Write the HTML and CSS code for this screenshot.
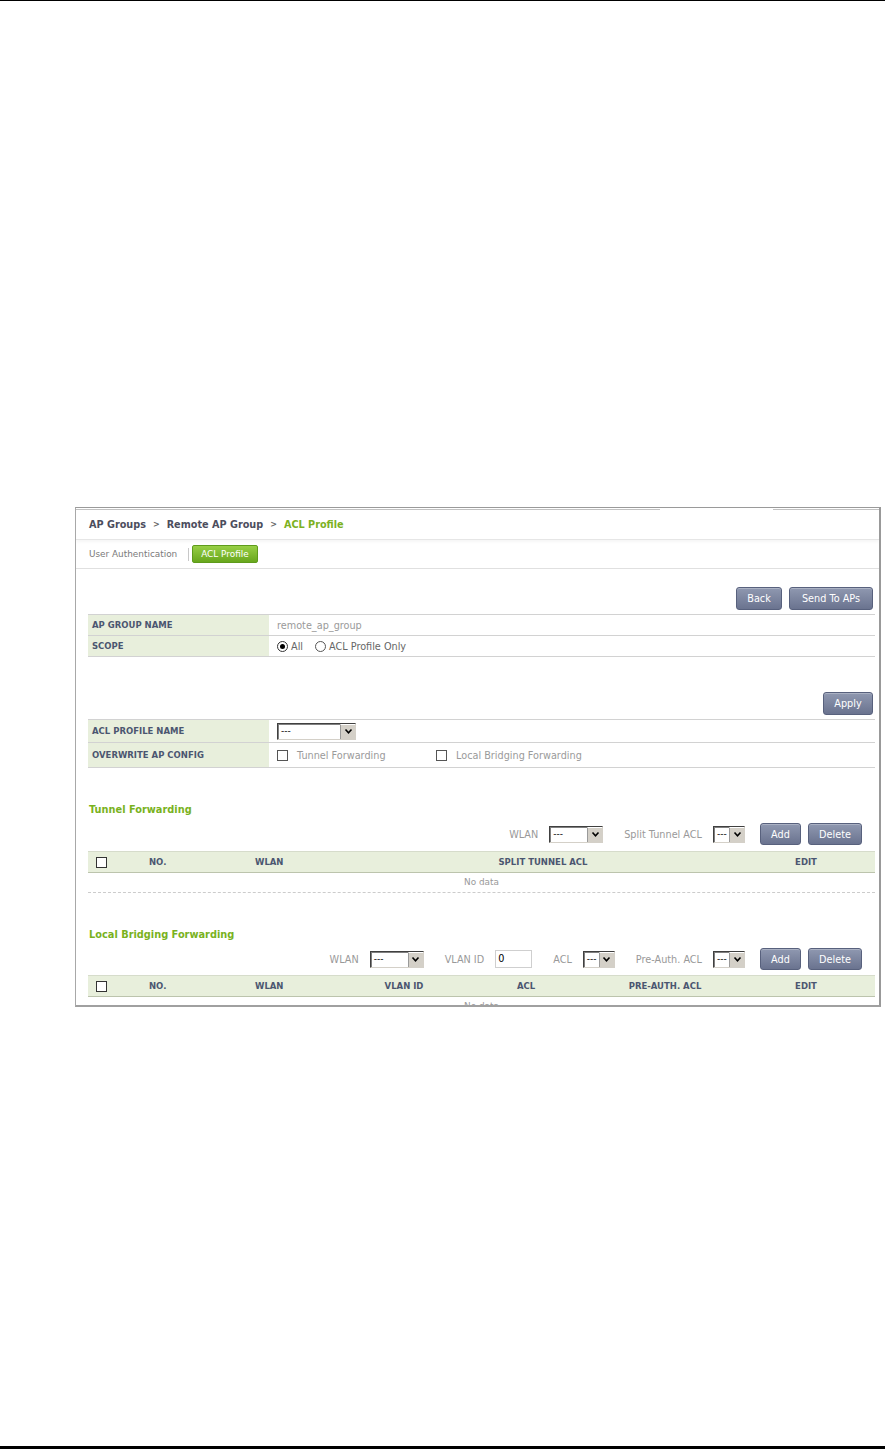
FILE: index.html
```html
<!DOCTYPE html>
<html lang="en">
<head>
    <meta charset="UTF-8">
    <title>ACL Profile</title>
    <link rel="stylesheet" href="styles.css">
</head>
<body>
<div class="doc">
    <div class="rule-top"></div>

    <div class="shot">
        <!-- leftover of the browser tab strip -->
        <div class="tabstrip">
            <span class="strip strip-a"></span>
            <span class="strip strip-gap"></span>
            <span class="strip strip-b"></span>
        </div>

        <div class="crumb">
            <span>AP Groups</span>
            <span class="sep">&gt;</span>
            <span>Remote AP Group</span>
            <span class="sep">&gt;</span>
            <span class="current">ACL Profile</span>
        </div>

        <div class="tabs">
            <span class="tab">User Authentication</span>
            <span class="tab-sep"></span>
            <span class="tab tab-active">ACL Profile</span>
        </div>

        <div class="content">
            <div class="actions actions-top">
                <button class="btn btn-back">Back</button>
                <button class="btn btn-send">Send To APs</button>
            </div>

            <div class="form">
                <div class="form-row">
                    <div class="form-label">AP GROUP NAME</div>
                    <div class="form-value muted">remote_ap_group</div>
                </div>
                <div class="form-row">
                    <div class="form-label">SCOPE</div>
                    <div class="form-value">
                        <span class="radio checked"></span><span class="opt-text">All</span>
                        <span class="radio radio-2"></span><span class="opt-text">ACL Profile Only</span>
                    </div>
                </div>
            </div>

            <div class="actions actions-apply">
                <button class="btn btn-apply">Apply</button>
            </div>

            <div class="form">
                <div class="form-row row-select">
                    <div class="form-label">ACL PROFILE NAME</div>
                    <div class="form-value">
                        <span class="select select-wide"><span class="select-text">---</span><span class="arrow"><svg width="9" height="7" viewBox="0 0 9 7"><path d="M1.5 1.5 L4.5 4.8 L7.5 1.5" fill="none" stroke="#000" stroke-width="1.6"/></svg></span></span>
                    </div>
                </div>
                <div class="form-row row-check">
                    <div class="form-label">OVERWRITE AP CONFIG</div>
                    <div class="form-value muted">
                        <span class="check-item check-first"><span class="checkbox"></span>Tunnel Forwarding</span>
                        <span class="check-item"><span class="checkbox"></span>Local Bridging Forwarding</span>
                    </div>
                </div>
            </div>

            <!-- Tunnel Forwarding -->
            <h2 class="section-title">Tunnel Forwarding</h2>
            <div class="controls">
                <span class="ctl-label">WLAN</span>
                <span class="select select-mid"><span class="select-text">---</span><span class="arrow"><svg width="9" height="7" viewBox="0 0 9 7"><path d="M1.5 1.5 L4.5 4.8 L7.5 1.5" fill="none" stroke="#000" stroke-width="1.6"/></svg></span></span>
                <span class="ctl-label">Split Tunnel ACL</span>
                <span class="select select-small"><span class="select-text">---</span><span class="arrow"><svg width="9" height="7" viewBox="0 0 9 7"><path d="M1.5 1.5 L4.5 4.8 L7.5 1.5" fill="none" stroke="#000" stroke-width="1.6"/></svg></span></span>
                <button class="btn btn-add">Add</button>
                <button class="btn btn-delete">Delete</button>
            </div>
            <div class="grid-head grid-tunnel">
                <div class="col-check"><span class="checkbox big"></span></div>
                <div>NO.</div>
                <div>WLAN</div>
                <div class="center">SPLIT TUNNEL ACL</div>
                <div class="center">EDIT</div>
            </div>
            <div class="no-data">No data</div>

            <!-- Local Bridging Forwarding -->
            <h2 class="section-title section-local">Local Bridging Forwarding</h2>
            <div class="controls">
                <span class="ctl-label">WLAN</span>
                <span class="select select-mid"><span class="select-text">---</span><span class="arrow"><svg width="9" height="7" viewBox="0 0 9 7"><path d="M1.5 1.5 L4.5 4.8 L7.5 1.5" fill="none" stroke="#000" stroke-width="1.6"/></svg></span></span>
                <span class="ctl-label">VLAN ID</span>
                <span class="text-input">0</span>
                <span class="ctl-label">ACL</span>
                <span class="select select-small"><span class="select-text">---</span><span class="arrow"><svg width="9" height="7" viewBox="0 0 9 7"><path d="M1.5 1.5 L4.5 4.8 L7.5 1.5" fill="none" stroke="#000" stroke-width="1.6"/></svg></span></span>
                <span class="ctl-label">Pre-Auth. ACL</span>
                <span class="select select-small"><span class="select-text">---</span><span class="arrow"><svg width="9" height="7" viewBox="0 0 9 7"><path d="M1.5 1.5 L4.5 4.8 L7.5 1.5" fill="none" stroke="#000" stroke-width="1.6"/></svg></span></span>
                <button class="btn btn-add">Add</button>
                <button class="btn btn-delete">Delete</button>
            </div>
            <div class="grid-head grid-local">
                <div class="col-check"><span class="checkbox big"></span></div>
                <div>NO.</div>
                <div>WLAN</div>
                <div class="center">VLAN ID</div>
                <div class="center">ACL</div>
                <div class="center">PRE-AUTH. ACL</div>
                <div class="center">EDIT</div>
            </div>
            <div class="no-data">No data</div>
        </div>
    </div>

    <div class="rule-bottom"></div>
</div>
</body>
</html>
```

FILE: styles.css
```css
body {
    margin: 0;
    padding: 0;
    background-color: #fff;
    font-family: 'DejaVu Sans', Verdana, sans-serif;
    color: #333;
}

.doc {
    height: 1449px;
    display: flex;
    flex-direction: column;
}

.rule-top {
    height: 1px;
    background-color: #000;
}

.rule-bottom {
    margin-top: auto;
    margin-bottom: 0;
    height: 3px;
    background-color: #000;
}

/* the embedded screenshot */
.shot {
    margin: 506px 0 0 75px;
    width: 803px;
    height: 497px;
    border-top: 1px solid #9a9a9a;
    border-left: 1px solid #a8a8a8;
    border-right: 2px solid #999;
    border-bottom: 2px solid #a0a0a0;
    overflow: hidden;
    background-color: #fff;
}

.tabstrip {
    display: flex;
    height: 2px;
}

.strip-a {
    width: 584px;
    border-bottom: 1px solid #c2c2c2;
}

.strip-gap {
    width: 113px;
}

.strip-b {
    flex-grow: 1;
    border-bottom: 1px solid #c2c2c2;
}

.crumb {
    height: 29px;
    padding-left: 13px;
    display: flex;
    align-items: center;
    font-size: 9.7px;
    font-weight: bold;
    color: #4c4d5d;
    border-bottom: 1px solid #e6e6e6;
    box-shadow: 0 2px 3px rgba(0, 0, 0, 0.04);
}

.crumb .sep {
    margin: 0 7px;
    font-size: 8px;
    color: #666;
}

.crumb .current {
    color: #7cb11f;
}

.tabs {
    height: 28px;
    padding-left: 13px;
    display: flex;
    align-items: center;
    border-bottom: 1px solid #e0e0e0;
}

.tab {
    font-size: 8.9px;
    color: #7a7a7a;
}

.tab-sep {
    width: 1px;
    height: 13px;
    margin: 0 3px 0 11px;
    background-color: #c8c8c8;
}

.tab-active {
    height: 16px;
    padding: 0 8px;
    line-height: 16px;
    color: #fff;
    border: 1px solid #5e9b1b;
    border-radius: 2px;
    background: linear-gradient(#97cf45, #68a71d);
}

.content {
    padding: 0 4px 0 12px;
}

.actions {
    display: flex;
    justify-content: flex-end;
    gap: 7px;
    padding-right: 2px;
}

.actions-top {
    margin-top: 18px;
    margin-bottom: 4px;
}

.actions-apply {
    margin-top: 35px;
    margin-bottom: 4px;
}

.btn {
    height: 23px;
    padding: 0;
    font-family: 'DejaVu Sans', Verdana, sans-serif;
    font-size: 9.7px;
    color: #fff;
    border: 1px solid #58617d;
    border-radius: 3px;
    background: linear-gradient(#8f98b0, #6a738f);
    box-shadow: inset 0 1px 0 rgba(255, 255, 255, 0.25);
}

.btn-back {
    width: 46px;
}

.btn-send {
    width: 84px;
}

.btn-apply {
    width: 50px;
    height: 23px;
}

.btn-add {
    width: 41px;
    height: 22px;
    margin-left: 15px;
}

.btn-delete {
    width: 54px;
    height: 22px;
    margin-left: 7px;
}

/* label / value form tables */
.form {
    border-top: 1px solid #d2d2d2;
}

.form-row {
    display: grid;
    grid-template-columns: 181px 1fr;
    height: 20px;
    border-bottom: 1px solid #d2d2d2;
}

.form-row.row-select {
    height: 22px;
}

.form-row.row-check {
    height: 24px;
}

.form-label {
    display: flex;
    align-items: center;
    padding-left: 4px;
    background-color: #e8efdc;
    font-size: 8.5px;
    font-weight: bold;
    color: #4b5670;
}

.form-value {
    display: flex;
    align-items: center;
    padding-left: 8px;
    font-size: 9.7px;
    color: #666;
}

.muted {
    color: #9a9a9a;
}

.radio {
    width: 9px;
    height: 9px;
    border: 1px solid #333;
    border-radius: 50%;
    background-color: #fff;
    position: relative;
}

.radio.checked::after {
    content: "";
    position: absolute;
    left: 2px;
    top: 2px;
    width: 5px;
    height: 5px;
    border-radius: 50%;
    background-color: #000;
}

.radio-2 {
    margin-left: 12px;
    border-color: #555;
}

.opt-text {
    margin-left: 3px;
}

.checkbox {
    display: inline-block;
    width: 9px;
    height: 9px;
    border: 1px solid #555;
    background-color: #fff;
}

.checkbox.big {
    width: 9px;
    height: 9px;
    border: 1px solid #333;
}

.check-item {
    display: flex;
    align-items: center;
    gap: 9px;
}

.check-first {
    width: 159px;
}

/* fake classic select boxes */
.select {
    display: inline-flex;
    height: 15px;
    border: 1px solid;
    border-color: #404040 #d4d0c8 #d4d0c8 #404040;
    box-shadow: inset 1px 1px 0 #808080;
    background-color: #fff;
    box-sizing: content-box;
}

.select-text {
    flex-grow: 1;
    padding: 0 0 0 3px;
    font-size: 9px;
    line-height: 15px;
    color: #000;
    overflow: hidden;
}

.arrow {
    width: 14px;
    display: flex;
    align-items: center;
    justify-content: center;
    background-color: #d4d0c8;
    border-left: 1px solid #9a9a9a;
    border-top: 1px solid #fff;
}

.select-wide {
    width: 77px;
}

.select-mid {
    width: 52px;
}

.select-small {
    width: 30px;
}

.text-input {
    width: 33px;
    height: 16px;
    padding-left: 2px;
    line-height: 16px;
    font-size: 9.7px;
    color: #000;
    border: 1px solid #cfcfcf;
}

/* sections */
.section-title {
    margin: 35px 0 0 1px;
    height: 14px;
    line-height: 14px;
    font-size: 9.8px;
    font-weight: bold;
    color: #79b21d;
}

.controls {
    margin-top: 6px;
    padding-right: 13px;
    display: flex;
    justify-content: flex-end;
    align-items: center;
    height: 22px;
}

.ctl-label {
    margin: 0 11px 0 21px;
    font-size: 9.7px;
    color: #999;
}

.grid-head {
    display: grid;
    margin-top: 6px;
    height: 20px;
    align-items: center;
    background-color: #e8efdc;
    border-top: 1px solid #d6dccb;
    border-bottom: 1px solid #bcc4ad;
    font-size: 8.5px;
    font-weight: bold;
    color: #4b5670;
}

.grid-tunnel {
    grid-template-columns: 61px 106px 94px 388px 138px;
}

.grid-local {
    margin-top: 5px;
    grid-template-columns: 61px 106px 94px 110px 134px 144px 138px;
}

.col-check {
    padding-left: 8px;
    display: flex;
    align-items: center;
}

.center {
    text-align: center;
}

.no-data {
    height: 19px;
    line-height: 19px;
    text-align: center;
    font-size: 8.9px;
    color: #999;
    border-bottom: 1px dashed #ccc;
}
```
